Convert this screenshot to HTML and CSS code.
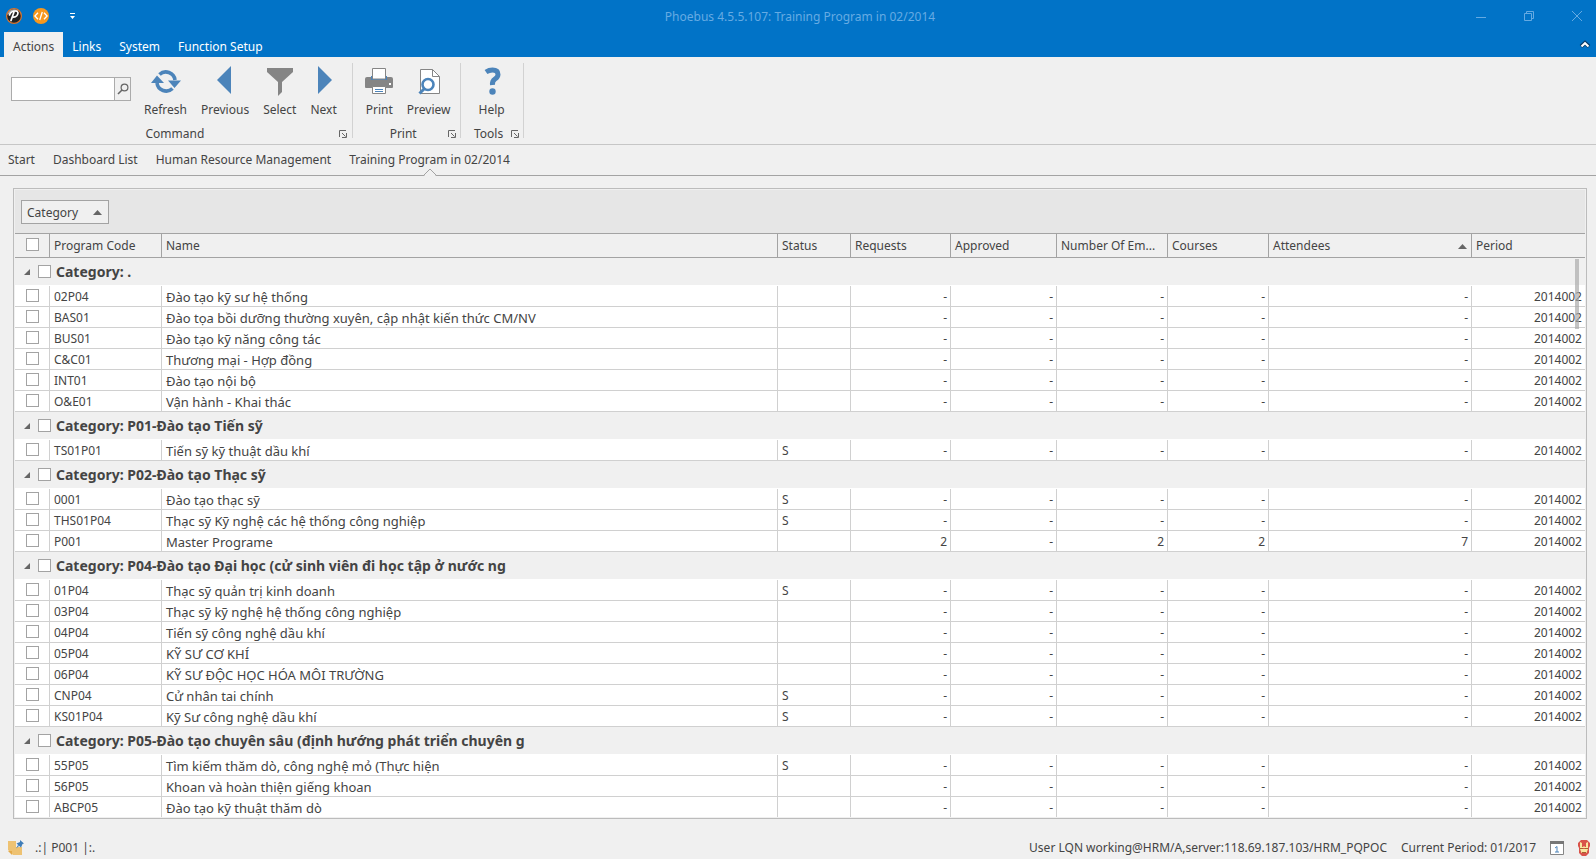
FILE: index.html
```html
<!DOCTYPE html>
<html lang="vi">
<head>
<meta charset="utf-8">
<title>Phoebus 4.5.5.107: Training Program in 02/2014</title>
<link rel="stylesheet" href="styles.css">
</head>
<body>
<div class="window">
  <header class="titlebar">
    <div class="caption-row">
      <div class="quick">
        <svg class="logo" width="18" height="18" viewBox="0 0 18 18"><circle cx="9" cy="9" r="7.4" fill="#222" stroke="#d9752f" stroke-width="1.2"/><path d="M2.4 8a6.6 6.600 0 0 1 11-4Q8 4 2.400 8z" fill="#aaa"/><path d="M9 5L6 13.500M4.500 8c1-3 3.500-4 6-4 3 0 3 2.500 1.500 4.500-1.200 1.400-2.500 1.700-4 1.500" fill="none" stroke="#fff" stroke-width="1.700" stroke-linecap="round"/></svg>
        <svg width="18" height="18" viewBox="0 0 18 18"><circle cx="9" cy="9" r="8" fill="#f7981d"/><path d="M6 5.700L2.900 9 6 12.300M12 5.700L15.100 9 12 12.300M10.300 5L7.700 13" fill="none" stroke="#fff" stroke-width="1.300"/></svg>
        <svg class="more" width="7" height="7" viewBox="0 0 7 7"><path d="M1 0h5v1H1zM1 3h5L3.500 6z" fill="#fff"/></svg>
      </div>
      <h1 class="title">Phoebus 4.5.5.107: Training Program in 02/2014</h1>
      <div class="win-buttons">
        <button type="button" aria-label="Minimize"><svg width="12" height="12" viewBox="0 0 12 12"><path d="M1 7.500h10" stroke="#65aae2"/></svg></button>
        <button type="button" aria-label="Restore"><svg width="12" height="12" viewBox="0 0 12 12"><path d="M1.500 3.500h7v7h-7zM3.500 3V1.500h7v7H9" fill="none" stroke="#65aae2"/></svg></button>
        <button type="button" aria-label="Close"><svg width="12" height="12" viewBox="0 0 12 12"><path d="M1 1l10 10M11 1L1 11" stroke="#65aae2"/></svg></button>
      </div>
    </div>
    <nav class="ribbon-tabs">
      <button type="button" class="ribbon-tab active">Actions</button>
      <button type="button" class="ribbon-tab">Links</button>
      <button type="button" class="ribbon-tab">System</button>
      <button type="button" class="ribbon-tab">Function Setup</button>
      <button type="button" class="collapse" aria-label="Collapse ribbon"><svg width="12" height="10" viewBox="0 0 12 10"><path d="M2 6.500L6 3l4 3.500" fill="none" stroke="#0a3a66" stroke-width="4"/><path d="M2.500 6.500L6 3.200l3.500 3.300" fill="none" stroke="#fff" stroke-width="2"/></svg></button>
    </nav>
  </header>

  <section class="ribbon">
    <div class="group">
      <div class="tools">
        <form class="search">
          <input type="text" aria-label="Search">
          <button type="button" aria-label="Find"><svg width="12" height="12" viewBox="0 0 12 12"><circle cx="7.500" cy="4.500" r="3.400" fill="none" stroke="#666" stroke-width="1.200"/><path d="M5 7L1 11" stroke="#666" stroke-width="1.600"/></svg></button>
        </form>
        <button type="button" class="tool"><svg width="32" height="32" viewBox="0 0 32 32"><path d="M9.500 9.500A9.200 9.200 0 0 1 25 15M22.500 23.500A9.200 9.200 0 0 1 7 18" fill="none" stroke="#4c84ba" stroke-width="3.600"/><path d="M1 18h13L7 10.500zM18 15.500h13L24.500 23z" fill="#4c84ba"/></svg>Refresh</button>
        <button type="button" class="tool"><svg width="32" height="32" viewBox="0 0 32 32"><path d="M22 1v28L8 15z" fill="#4c84ba"/></svg>Previous</button>
        <button type="button" class="tool"><svg width="32" height="32" viewBox="0 0 32 32"><path d="M3 3h26v4L18 17v10l-4 4V17L3 7z" fill="#858585"/></svg>Select</button>
        <button type="button" class="tool"><svg width="32" height="32" viewBox="0 0 32 32"><path d="M10 1v28l14-14z" fill="#4c84ba"/></svg>Next</button>
      </div>
      <div class="group-caption"><span>Command</span><button type="button" aria-label="Command options"><svg width="8" height="8" viewBox="0 0 8 8"><path d="M.5 7V.5H7M3 3l3.500 3.500M7.500 3v4.500H3" fill="none" stroke="#666"/></svg></button></div>
    </div>
    <div class="group">
      <div class="tools">
        <button type="button" class="tool"><svg width="32" height="32" viewBox="0 0 32 32"><path d="M2 14q0-2 2-2h24q2 0 2 2v8q0 1-1 1H3q-1 0-1-1z" fill="#858585"/><path d="M8 11h16v4H8z" fill="#4c84ba"/><path d="M9.500 14V3.500h13V14zM9.500 21.500h13v7h-13z" fill="#fff" stroke="#858585"/><path d="M12 24.500h8M12 26.500h8" stroke="#4c84ba"/><path d="M26 18h2v2h-2z" fill="#fff"/></svg>Print</button>
        <button type="button" class="tool"><svg width="32" height="32" viewBox="0 0 32 32"><path d="M7.500 4.500h12l7 7v17h-19z" fill="#fff" stroke="#858585"/><path d="M19.500 4.500v7h7" fill="none" stroke="#858585"/><circle cx="15" cy="19.500" r="5.500" fill="#fff" stroke="#4c84ba" stroke-width="2.600"/><path d="M11 24L6.500 28.500" stroke="#4c84ba" stroke-width="3"/></svg>Preview</button>
      </div>
      <div class="group-caption"><span>Print</span><button type="button" aria-label="Print options"><svg width="8" height="8" viewBox="0 0 8 8"><path d="M.5 7V.5H7M3 3l3.500 3.500M7.500 3v4.500H3" fill="none" stroke="#666"/></svg></button></div>
    </div>
    <div class="group narrow">
      <div class="tools">
        <button type="button" class="tool"><svg width="32" height="32" viewBox="0 0 32 32"><path d="M10 7q3-2 6.500-2 5.500 0 5.500 4.500 0 2.500-3 4.500t-2.500 6" fill="none" stroke="#4c84ba" stroke-width="5"/><circle cx="16.500" cy="26.500" r="3.200" fill="#4c84ba"/></svg>Help</button>
      </div>
      <div class="group-caption"><span>Tools</span><button type="button" aria-label="Tools options"><svg width="8" height="8" viewBox="0 0 8 8"><path d="M.5 7V.5H7M3 3l3.500 3.500M7.500 3v4.500H3" fill="none" stroke="#666"/></svg></button></div>
    </div>
  </section>

  <nav class="doc-tabs">
    <a href="#">Start</a>
    <a href="#">Dashboard List</a>
    <a href="#">Human Resource Management</a>
    <a href="#" class="current">Training Program in 02/2014<svg class="notch" width="14" height="8" viewBox="0 0 14 8"><path d="M1 8L7 1.500 13 8z" fill="#f0f0f0"/><path d="M.5 7.500L7 1l6.500 6.500" fill="none" stroke="#a3a3a3"/></svg></a>
  </nav>

  <main class="grid">
    <div class="group-panel"><button type="button" class="group-by">Category<svg width="9" height="5" viewBox="0 0 9 5"><path d="M0 5L4.500 0 9 5z" fill="#666"/></svg></button></div>
    <table>
      <colgroup><col class="c-check"><col class="c-code"><col><col class="c-status"><col class="c-req"><col class="c-app"><col class="c-emp"><col class="c-cou"><col class="c-att"><col class="c-per"></colgroup>
      <thead>
        <tr><th><input type="checkbox" aria-label="Select all"></th><th>Program Code</th><th>Name</th><th>Status</th><th>Requests</th><th>Approved</th><th>Number Of Em...</th><th>Courses</th><th><div class="sorted">Attendees<svg width="9" height="5" viewBox="0 0 9 5"><path d="M0 5L4.500 0 9 5z" fill="#666"/></svg></div></th><th>Period</th></tr>
      </thead>
      <tbody>
        <tr class="cat"><td colspan="10"><label><svg width="6" height="6" viewBox="0 0 6 6"><path d="M6 0v6H0z" fill="#666"/></svg><input type="checkbox">Category: .</label></td></tr>
        <tr><td><input type="checkbox" aria-label="02P04"></td><td>02P04</td><td>Đào tạo kỹ sư hệ thống</td><td></td><td>-</td><td>-</td><td>-</td><td>-</td><td>-</td><td>2014002</td></tr>
        <tr><td><input type="checkbox" aria-label="BAS01"></td><td>BAS01</td><td>Đào tọa bồi dưỡng thường xuyên, cập nhật kiến thức CM/NV</td><td></td><td>-</td><td>-</td><td>-</td><td>-</td><td>-</td><td>2014002</td></tr>
        <tr><td><input type="checkbox" aria-label="BUS01"></td><td>BUS01</td><td>Đào tạo kỹ năng công tác</td><td></td><td>-</td><td>-</td><td>-</td><td>-</td><td>-</td><td>2014002</td></tr>
        <tr><td><input type="checkbox" aria-label="C&amp;C01"></td><td>C&amp;C01</td><td>Thương mại - Hợp đồng</td><td></td><td>-</td><td>-</td><td>-</td><td>-</td><td>-</td><td>2014002</td></tr>
        <tr><td><input type="checkbox" aria-label="INT01"></td><td>INT01</td><td>Đào tạo nội bộ</td><td></td><td>-</td><td>-</td><td>-</td><td>-</td><td>-</td><td>2014002</td></tr>
        <tr><td><input type="checkbox" aria-label="O&amp;E01"></td><td>O&amp;E01</td><td>Vận hành - Khai thác</td><td></td><td>-</td><td>-</td><td>-</td><td>-</td><td>-</td><td>2014002</td></tr>
        <tr class="cat"><td colspan="10"><label><svg width="6" height="6" viewBox="0 0 6 6"><path d="M6 0v6H0z" fill="#666"/></svg><input type="checkbox">Category: P01-Đào tạo Tiến sỹ</label></td></tr>
        <tr><td><input type="checkbox" aria-label="TS01P01"></td><td>TS01P01</td><td>Tiến sỹ kỹ thuật dầu khí</td><td>S</td><td>-</td><td>-</td><td>-</td><td>-</td><td>-</td><td>2014002</td></tr>
        <tr class="cat"><td colspan="10"><label><svg width="6" height="6" viewBox="0 0 6 6"><path d="M6 0v6H0z" fill="#666"/></svg><input type="checkbox">Category: P02-Đào tạo Thạc sỹ</label></td></tr>
        <tr><td><input type="checkbox" aria-label="0001"></td><td>0001</td><td>Đào tạo thạc sỹ</td><td>S</td><td>-</td><td>-</td><td>-</td><td>-</td><td>-</td><td>2014002</td></tr>
        <tr><td><input type="checkbox" aria-label="THS01P04"></td><td>THS01P04</td><td>Thạc sỹ Kỹ nghệ các hệ thống công nghiệp</td><td>S</td><td>-</td><td>-</td><td>-</td><td>-</td><td>-</td><td>2014002</td></tr>
        <tr><td><input type="checkbox" aria-label="P001"></td><td>P001</td><td>Master Programe</td><td></td><td>2</td><td>-</td><td>2</td><td>2</td><td>7</td><td>2014002</td></tr>
        <tr class="cat"><td colspan="10"><label><svg width="6" height="6" viewBox="0 0 6 6"><path d="M6 0v6H0z" fill="#666"/></svg><input type="checkbox">Category: P04-Đào tạo Đại học (cử sinh viên đi học tập ở nước ng</label></td></tr>
        <tr><td><input type="checkbox" aria-label="01P04"></td><td>01P04</td><td>Thạc sỹ quản trị kinh doanh</td><td>S</td><td>-</td><td>-</td><td>-</td><td>-</td><td>-</td><td>2014002</td></tr>
        <tr><td><input type="checkbox" aria-label="03P04"></td><td>03P04</td><td>Thạc sỹ kỹ nghệ hệ thống công nghiệp</td><td></td><td>-</td><td>-</td><td>-</td><td>-</td><td>-</td><td>2014002</td></tr>
        <tr><td><input type="checkbox" aria-label="04P04"></td><td>04P04</td><td>Tiến sỹ công nghệ dầu khí</td><td></td><td>-</td><td>-</td><td>-</td><td>-</td><td>-</td><td>2014002</td></tr>
        <tr><td><input type="checkbox" aria-label="05P04"></td><td>05P04</td><td>KỸ SƯ CƠ KHÍ</td><td></td><td>-</td><td>-</td><td>-</td><td>-</td><td>-</td><td>2014002</td></tr>
        <tr><td><input type="checkbox" aria-label="06P04"></td><td>06P04</td><td>KỸ SƯ ĐỘC HỌC HÓA MÔI TRƯỜNG</td><td></td><td>-</td><td>-</td><td>-</td><td>-</td><td>-</td><td>2014002</td></tr>
        <tr><td><input type="checkbox" aria-label="CNP04"></td><td>CNP04</td><td>Cử nhân tai chính</td><td>S</td><td>-</td><td>-</td><td>-</td><td>-</td><td>-</td><td>2014002</td></tr>
        <tr><td><input type="checkbox" aria-label="KS01P04"></td><td>KS01P04</td><td>Kỹ Sư công nghệ dầu khí</td><td>S</td><td>-</td><td>-</td><td>-</td><td>-</td><td>-</td><td>2014002</td></tr>
        <tr class="cat"><td colspan="10"><label><svg width="6" height="6" viewBox="0 0 6 6"><path d="M6 0v6H0z" fill="#666"/></svg><input type="checkbox">Category: P05-Đào tạo chuyên sâu (định hướng phát triển chuyên g</label></td></tr>
        <tr><td><input type="checkbox" aria-label="55P05"></td><td>55P05</td><td>Tìm kiếm thăm dò, công nghệ mỏ (Thực hiện</td><td>S</td><td>-</td><td>-</td><td>-</td><td>-</td><td>-</td><td>2014002</td></tr>
        <tr><td><input type="checkbox" aria-label="56P05"></td><td>56P05</td><td>Khoan và hoàn thiện giếng khoan</td><td></td><td>-</td><td>-</td><td>-</td><td>-</td><td>-</td><td>2014002</td></tr>
        <tr><td><input type="checkbox" aria-label="ABCP05"></td><td>ABCP05</td><td>Đào tạo kỹ thuật thăm dò</td><td></td><td>-</td><td>-</td><td>-</td><td>-</td><td>-</td><td>2014002</td></tr>
      </tbody>
    </table>
    <div class="scroll-thumb"></div>
  </main>

  <footer class="status">
    <svg width="16" height="16" viewBox="0 0 16 16"><path d="M0 1h14v14H5L0 10z" fill="#eec272"/><path d="M0 11h4v4z" fill="#e3a94a"/><path d="M8 1h7v6H8z" fill="#f0f0f0"/><path d="M12 0l4 3.500-1.500.5-1.500 3.500L8.500 3.500 12 2zM10 5l1 1-3 2.500z" fill="#3f7db8"/></svg>
    <span class="code">.:| P001 |:.</span>
    <span class="user">User LQN working@HRM/A,server:118.69.187.103/HRM_PQPOC</span>
    <span class="period">Current Period: 01/2017</span>
    <svg width="16" height="16" viewBox="0 0 16 16"><path d="M1.500 1.500h13v13h-13z" fill="#fff" stroke="#858585"/><path d="M1 1h14v3H1z" fill="#777"/><path d="M6 8l2-1.500V12M6 12h4" fill="none" stroke="#4c84ba"/></svg>
    <svg width="14" height="18" viewBox="0 0 14 18"><path d="M4 1h6l3 3v3l-1 2v5l-3 3H5l-3-3V9L1 7V4z" fill="#d9534a"/><path d="M3 3l2 1v4h1l1-1 1 1h1V4l2-1v6H3zM3 10h8l-1.500 4h-5z" fill="#f8e6a0"/><path d="M3 9.500h3M8 9.500h3M5 13.500h4" stroke="#a5622e"/></svg>
  </footer>
</div>
</body>
</html>
```
FILE: styles.css
```css
* { box-sizing: border-box; }
body {
  margin: 0;
  background: #f0f0f0;
  color: #444;
  font: 12px/18px "Noto Sans", "Open Sans", sans-serif;
}
button, input { font: inherit; color: inherit; margin: 0; }
button { background: none; border: 0; padding: 0; }
svg { display: block; flex: none; }
.window { display: flex; flex-direction: column; min-height: 100vh; }

.titlebar { background: #0173c7; }
.caption-row { display: grid; grid-template-columns: 1fr auto 1fr; align-items: center; height: 32px; }
.quick { display: flex; align-items: center; gap: 9px; padding-left: 5px; }
.more { margin-left: 10px; }
.title { margin: 0; padding: 2px 0 0 4px; font-size: 12px; font-weight: 400; color: #66abe3; }
.win-buttons { display: flex; justify-content: flex-end; gap: 36px; padding-right: 13px; }
.ribbon-tabs { display: flex; height: 25px; padding-left: 4px; }
.ribbon-tab { padding: 4px 9px 0; color: #fff; }
.ribbon-tab.active { background: #f0f0f0; color: #444; }
.collapse { margin-left: auto; padding-right: 5px; }

.ribbon { display: flex; height: 88px; padding: 6px 0; border-bottom: 1px solid #c6c6c6; }
.group { display: flex; flex-direction: column; padding: 0 2px 0 6px; border-right: 1px solid #d2d2d2; }
.group:first-child { padding-left: 11px; padding-right: 5px; }
.tools { display: flex; }
.group:first-child .tools { padding-right: 3px; }
.narrow .tools { justify-content: center; padding: 0 9px 0 5px; }
.tool { display: flex; flex-direction: column; align-items: center; gap: 4px; padding: 2px 7px 0; }
.tool svg { margin: 0 -4px; }
.search { display: flex; height: 24px; width: 120px; margin: 14px 6px 0 0; border: 1px solid #ababab; }
.search input { flex: 1; min-width: 0; border: 0; background: #fff; }
.search button { width: 16px; border-left: 1px solid #ababab; display: grid; place-items: center; }
.group-caption { display: flex; align-items: center; margin-top: 6px; text-align: center; }
.group-caption span { flex: 1; }
.group-caption button { padding-right: 2px; }
.group:first-child .group-caption button { padding-right: 0; }

.doc-tabs { display: flex; gap: 18px; height: 31px; padding: 6px 8px; border-bottom: 1px solid #a3a3a3; }
.doc-tabs a { color: inherit; text-decoration: none; }
.current { position: relative; }
.notch { position: absolute; bottom: -7px; left: 50%; transform: translateX(-50%); }

.grid { position: relative; margin: 12px 9px 0 13px; padding: 1px; border: 1px solid #bcbcbc; }
.group-panel { height: 43px; padding: 10px 6px; background: #e6e6e6; }
.group-by { display: flex; align-items: center; gap: 15px; height: 24px; padding: 1px 6px 0 5px; border: 1px solid #a3a3a3; background: #f0f0f0; }
table { width: 100%; table-layout: fixed; border-collapse: separate; border-spacing: 0; }
.c-check { width: 35px; }
.c-code { width: 112px; }
.c-status { width: 73px; }
.c-req { width: 100px; }
.c-app { width: 106px; }
.c-emp { width: 111px; }
.c-cou { width: 101px; }
.c-att { width: 203px; }
.c-per { width: 113px; }
th { height: 25px; padding: 1px 4px 0; border: solid #a3a3a3; border-width: 1px 1px 1px 0; font-weight: 400; text-align: left; white-space: nowrap; }
td { height: 21px; padding: 2px 4px 0; background: #fff; border: solid #d0d0d0; border-width: 0 1px 1px 0; white-space: nowrap; overflow: hidden; }
th:last-child, td:last-child { border-right: 0; }
td:nth-child(3) { font-size: 13px; }
td:nth-child(n+5) { padding-right: 3px; text-align: right; }
th:first-child { padding: 0 4px 2px 11px; }
td:first-child { padding: 0 4px 2px 11px; }
tbody tr:last-child td { height: 20px; border-bottom: 0; }
input[type="checkbox"] { appearance: none; display: block; width: 13px; height: 13px; border: 1px solid #a3a3a3; background: #fff; }
.sorted { display: flex; align-items: center; justify-content: space-between; }
.cat td { height: 28px; background: #f0f0f0; border-bottom-color: #fff; font-size: 14px; font-weight: 700; }
.cat td:first-child { padding: 0 4px 0 9px; }
.cat label { display: flex; align-items: center; }
.cat input[type="checkbox"] { margin: 0 5px 0 8px; }
.scroll-thumb { position: absolute; top: 70px; right: 7px; width: 4px; height: 70px; background: #aaaaaab0; }

.status { display: flex; align-items: center; margin-top: auto; height: 24px; padding: 1px 5px 0 8px; }
.code { margin-left: 11px; }
.user { margin-left: auto; }
.period { margin: 0 13px 0 14px; }
.period + svg { margin-right: 12px; }
```
